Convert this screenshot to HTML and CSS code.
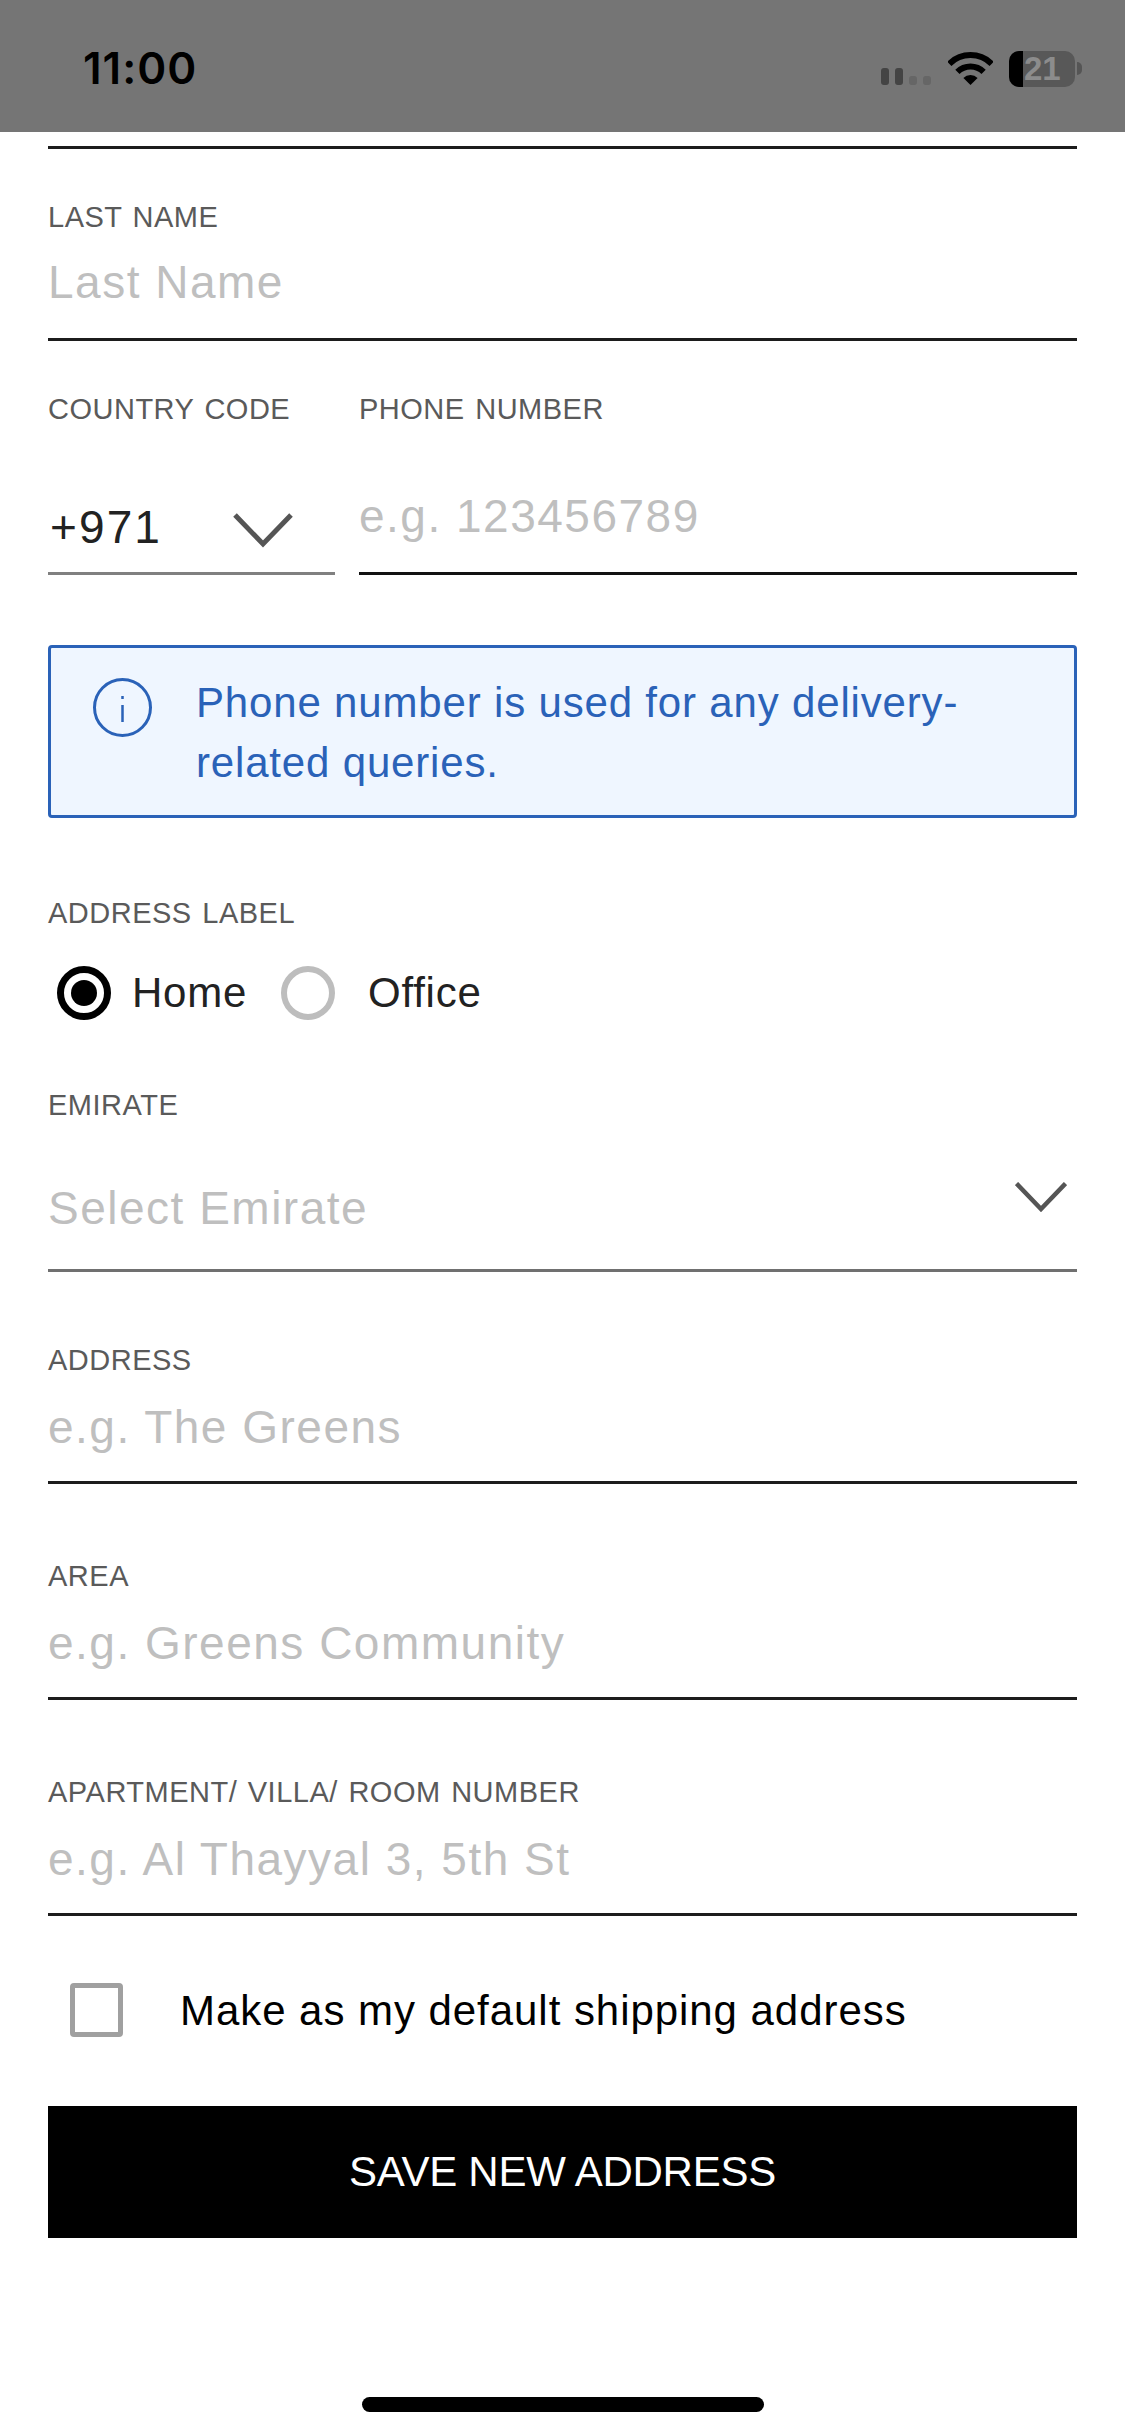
FILE: index.html
```html
<!DOCTYPE html>
<html lang="en">
<head>
<meta charset="utf-8">
<title>Add address</title>
<link rel="stylesheet" href="styles.css">
</head>
<body>
<header class="status">
  <span class="time">11:00</span>
  <div class="status-icons">
    <div class="signal"><i class="bar on"></i><i class="bar on"></i><i class="bar off"></i><i class="bar off"></i></div>
    <svg class="wifi" width="45" height="33" viewBox="0 0 45 33"><path d="M1.3 11.8A30 30 0 0 1 43.7 11.8M9.4 19.9A18.5 18.5 0 0 1 35.6 19.9" fill="none" stroke="#000" stroke-width="6"/><path d="M15.4 25.9A10 10 0 0 1 29.6 25.9L22.5 33Z" fill="#000"/></svg>
    <div class="battery"><i class="battery-fill"></i><span class="battery-level">21</span></div>
    <i class="battery-nub"></i>
  </div>
</header>
<main class="form">
  <div class="stub"></div>

  <div class="field first">
    <div class="label">LAST NAME</div>
    <div class="value ph">Last Name</div>
  </div>

  <div class="phone-row">
    <div class="col code">
      <div class="label">COUNTRY CODE</div>
      <div class="select-row">
        <span class="value">+971</span>
        <svg class="chev-code" width="60" height="35" viewBox="0 0 60 35"><path d="M2 2L30 31L58 2" fill="none" stroke="#555" stroke-width="5"/></svg>
      </div>
    </div>
    <div class="col phone">
      <div class="label">PHONE NUMBER</div>
      <div class="value ph">e.g. 123456789</div>
    </div>
  </div>

  <div class="notice">
    <svg class="info" width="59" height="59" viewBox="0 0 59 59"><circle cx="29.5" cy="29.5" r="28" fill="none" stroke="#2a62b8" stroke-width="3"/><path d="M29.5 18v3M29.5 27v17" fill="none" stroke="#2a62b8" stroke-width="2.5"/></svg>
    <p class="notice-text">Phone number is used for any delivery-<br>related queries.</p>
  </div>

  <div class="label addr-label">ADDRESS LABEL</div>
  <div class="radios">
    <span class="radio checked"><i class="dot"></i></span>
    <span class="opt opt-home">Home</span>
    <span class="radio blank"></span>
    <span class="opt opt-office">Office</span>
  </div>

  <div class="field emirate">
    <div class="label">EMIRATE</div>
    <div class="select-row wide">
      <span class="value ph">Select Emirate</span>
      <svg class="chev-emirate" width="52" height="30" viewBox="0 0 52 30"><path d="M1.5 1.5L26 27L50.5 1.5" fill="none" stroke="#555" stroke-width="4.5"/></svg>
    </div>
  </div>

  <div class="field address">
    <div class="label">ADDRESS</div>
    <div class="value ph">e.g. The Greens</div>
  </div>
  <div class="field next">
    <div class="label">AREA</div>
    <div class="value ph">e.g. Greens Community</div>
  </div>
  <div class="field next">
    <div class="label">APARTMENT/ VILLA/ ROOM NUMBER</div>
    <div class="value ph">e.g. Al Thayyal 3, 5th St</div>
  </div>

  <div class="default-row">
    <span class="checkbox"></span>
    <span class="default-text">Make as my default shipping address</span>
  </div>

  <button class="save" type="button">SAVE NEW ADDRESS</button>
</main>
<div class="home-bar"></div>
</body>
</html>
```

FILE: styles.css
```css
* { box-sizing: border-box; }
html, body { margin: 0; padding: 0; }
body {
  width: 1125px;
  height: 2436px;
  overflow: hidden;
  background: #fff;
  font-family: "Liberation Sans", Arial, sans-serif;
}
.status {
  height: 132px;
  background: #757575;
  display: flex;
  justify-content: space-between;
  padding: 46px 43px 0 83px;
}
.time { font-family: Inter, "Liberation Sans", sans-serif; font-size: 44px; line-height: 44px; font-weight: 600; letter-spacing: 1px; color: #000; }
.status-icons { display: flex; align-items: flex-start; }
.signal { display: flex; align-items: flex-end; gap: 5.5px; height: 17px; margin-top: 22px; margin-right: 17px; }
.bar { display: block; width: 8.5px; border-radius: 3px; }
.bar.on { height: 17px; background: #444; }
.bar.off { height: 9px; background: #666; }
.wifi { margin-top: 6px; margin-right: 16px; }
.battery {
  width: 66px; height: 36px; margin-top: 5px;
  background: #585858; border-radius: 10px;
  overflow: hidden; display: flex;
}
.battery-fill { display: block; width: 14px; background: #000; }
.battery-level { font-size: 33px; line-height: 36px; font-weight: 700; color: #8c8c8c; margin-left: 1px; }
.battery-nub { display: block; width: 5px; height: 13px; margin: 16px 0 0 2px; background: #555; border-radius: 0 7px 7px 0; }

.form { padding: 0 48px; }
.stub { height: 17px; border-bottom: 3px solid #1c1c1c; }
.label { font-size: 29px; line-height: 36px; letter-spacing: 0.5px; word-spacing: 2px; color: #5a5a5a; height: 36px; white-space: nowrap; }
.value { display: block; font-size: 46px; line-height: 60px; letter-spacing: 1.5px; color: #222; white-space: nowrap; }
.ph { color: #bfbfbf; }
.field { border-bottom: 3px solid #1c1c1c; }
.field > .value { margin-top: 19px; padding-bottom: 24px; }
.first > .value { margin-top: 17px; padding-bottom: 26px; }
.first { margin-top: 50px; }

.phone-row { display: flex; gap: 24px; margin-top: 50px; }
.col { display: block; }
.code { width: 287px; flex: none; }
.phone { flex: 1; }
.select-row { display: flex; justify-content: space-between; align-items: flex-start; }
.code .select-row { margin-top: 70px; padding: 0 42px 15px 2px; border-bottom: 3px solid #808080; }
.code .value { letter-spacing: 2.1px; }
.chev-code { margin-top: 16px; }
.phone .value { margin-top: 59px; padding-bottom: 26px; border-bottom: 3px solid #111; }

.notice {
  margin-top: 70px;
  height: 173px;
  padding: 30px 20px 0 42px;
  background: #eff6ff;
  border: 3px solid #2a62b8;
  border-radius: 4px;
  display: flex;
  align-items: flex-start;
  gap: 44px;
}
.info { flex: none; }
.notice-text { margin: -5px 0 0; font-size: 42px; line-height: 60px; letter-spacing: 0.83px; color: #2a62b8; }

.addr-label { margin-top: 77px; }
.radios { display: flex; align-items: center; height: 54px; margin-top: 35px; padding-left: 9px; }
.radio { width: 54px; height: 54px; border-radius: 50%; flex: none; display: flex; align-items: center; justify-content: center; }
.radio.checked { border: 7px solid #000; }
.radio.blank { border: 6px solid #bdbdbd; }
.dot { display: block; width: 26px; height: 26px; border-radius: 50%; background: #000; }
.opt { font-size: 42px; line-height: 60px; letter-spacing: 0.75px; color: #222; }
.opt-home { margin: 0 34px 0 21px; }
.opt-office { margin-left: 33px; }

.emirate { margin-top: 67px; border-bottom-color: #707070; }
.select-row.wide { margin-top: 55px; padding-bottom: 31px; }
.chev-emirate { margin: 4px 10px 0 0; }
.address { margin-top: 70px; }
.next { margin-top: 74px; }

.default-row { display: flex; align-items: center; height: 54px; margin-top: 67px; padding-left: 22px; }
.checkbox { width: 53px; height: 54px; flex: none; border: 5px solid #a0a0a0; border-radius: 4px; }
.default-text { margin-left: 57px; padding-top: 2px; font-size: 42px; line-height: 60px; letter-spacing: 0.95px; color: #000; white-space: nowrap; }

.save {
  display: block;
  width: 100%;
  height: 132px;
  margin-top: 69px;
  padding: 0;
  border: 0;
  background: #000;
  color: #fff;
  font-family: inherit;
  font-size: 42px;
  letter-spacing: -0.25px;
  line-height: 132px;
  text-align: center;
}
.home-bar { width: 402px; height: 15px; margin: 159px auto 0; background: #000; border-radius: 8px; }
```
